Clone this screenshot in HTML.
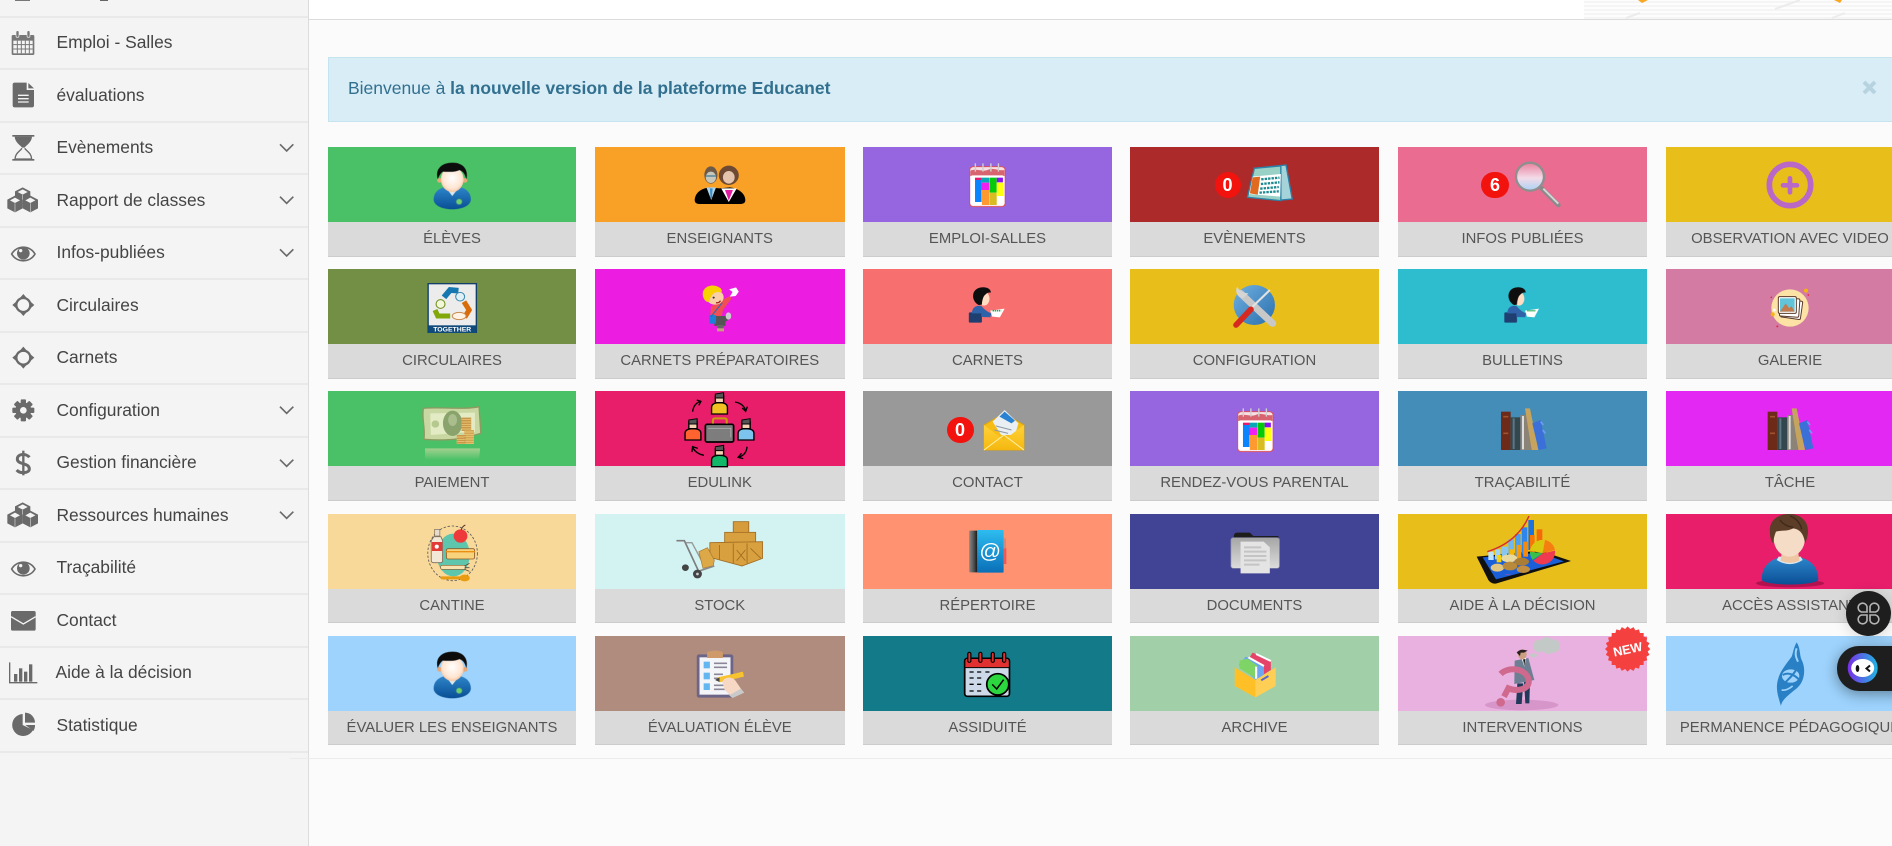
<!DOCTYPE html>
<html lang="fr">
<head>
<meta charset="utf-8">
<title>Educanet</title>
<style>
html,body{margin:0;padding:0;width:1892px;height:846px;overflow:hidden;background:#fbfbfb;font-family:"Liberation Sans",Arial,sans-serif}
.abs,.t,.l,.m,.tx{position:absolute}
#side{position:absolute;left:0;top:0;width:308px;height:846px;background:#f4f4f4;border-right:1px solid #dcdcdc}
.ln{position:absolute;left:0;width:308px;height:2px;background:#e9e9e9}
.tx{left:56.5px;height:24px;line-height:23px;font-size:17.4px;color:#444;white-space:nowrap}
#hdr{position:absolute;left:309px;top:0;right:0;height:19px;background:#fff;border-bottom:1px solid #dcdcdc}
#pat{position:absolute;left:1584px;top:0;width:308px;height:19px;background:repeating-linear-gradient(0deg,#f5f5f5 0 2px,#fdfdfd 2px 4px)}
#alert{position:absolute;left:328px;top:57px;width:1600px;height:63px;background:#d9edf7;border:1px solid #c4e5ef;box-sizing:content-box;color:#31708f;font-size:17.5px;line-height:61px;text-indent:19px;white-space:nowrap}
.t{height:109px}
.m{left:0;top:0;width:100%;height:75px}
.l{left:0;top:75px;width:100%;height:34px;background:#dadada;border-bottom:1px solid #ccc;text-align:center;color:#555;font-size:14.85px;line-height:35px;white-space:nowrap}
.r4 .l,.r5 .l{height:33px}
.c1{left:328px;width:248px}.c2{left:595px;width:249.5px}.c3{left:863px;width:249px}
.c4{left:1130px;width:249px}.c5{left:1398px;width:249px}.c6{left:1666px;width:248px}
.r1{top:147px}.r2{top:269px}.r3{top:391px}.r4{top:514px}.r5{top:636px}
.b{position:absolute;background:#f2120e;color:#fff;font-weight:bold;font-size:18px;text-align:center;z-index:5}
#foot{position:absolute;left:290px;top:758px;width:1602px;height:1px;background:#ebebeb}
svg.o{position:absolute;left:0;top:0;z-index:4}
.f{position:absolute;background:#1e1e1e;z-index:6}
</style>
</head>
<body>

<div id="side">
<div class="ln" style="top:16px"></div><div class="ln" style="top:68px"></div><div class="ln" style="top:121px"></div><div class="ln" style="top:173px"></div><div class="ln" style="top:226px"></div><div class="ln" style="top:278px"></div><div class="ln" style="top:331px"></div><div class="ln" style="top:383px"></div><div class="ln" style="top:436px"></div><div class="ln" style="top:488px"></div><div class="ln" style="top:541px"></div><div class="ln" style="top:593px"></div><div class="ln" style="top:646px"></div><div class="ln" style="top:698px"></div><div class="ln" style="top:751px"></div>
<div class="tx" style="top:31px">Emploi - Salles</div>
<div class="tx" style="top:84px">évaluations</div>
<div class="tx" style="top:136px">Evènements</div>
<div class="tx" style="top:189px">Rapport de classes</div>
<div class="tx" style="top:241px">Infos-publiées</div>
<div class="tx" style="top:294px">Circulaires</div>
<div class="tx" style="top:346px">Carnets</div>
<div class="tx" style="top:399px">Configuration</div>
<div class="tx" style="top:451px">Gestion financière</div>
<div class="tx" style="top:504px">Ressources humaines</div>
<div class="tx" style="top:556px">Traçabilité</div>
<div class="tx" style="top:609px">Contact</div>
<div class="tx" style="top:661px;left:55.5px">Aide à la décision</div>
<div class="tx" style="top:714px">Statistique</div>
</div>

<div id="hdr"></div>
<div id="pat"></div>
<div id="alert">Bienvenue à <b>la nouvelle version de la plateforme Educanet</b></div>

<div class="t c1 r1"><div class="m" style="background:#4ac167"></div><div class="l">ÉLÈVES</div></div>
<div class="t c2 r1"><div class="m" style="background:#f9a026"></div><div class="l">ENSEIGNANTS</div></div>
<div class="t c3 r1"><div class="m" style="background:#9666e0"></div><div class="l">EMPLOI-SALLES</div></div>
<div class="t c4 r1"><div class="m" style="background:#ad2a2a"></div><div class="l">EVÈNEMENTS</div></div>
<div class="t c5 r1"><div class="m" style="background:#ea6d91"></div><div class="l">INFOS PUBLIÉES</div></div>
<div class="t c6 r1"><div class="m" style="background:#e8be1a"></div><div class="l">OBSERVATION AVEC VIDEO</div></div>

<div class="t c1 r2"><div class="m" style="background:#728f45"></div><div class="l">CIRCULAIRES</div></div>
<div class="t c2 r2"><div class="m" style="background:#ec1de0"></div><div class="l">CARNETS PRÉPARATOIRES</div></div>
<div class="t c3 r2"><div class="m" style="background:#f76f6f"></div><div class="l">CARNETS</div></div>
<div class="t c4 r2"><div class="m" style="background:#e8be1a"></div><div class="l">CONFIGURATION</div></div>
<div class="t c5 r2"><div class="m" style="background:#2ebdcf"></div><div class="l">BULLETINS</div></div>
<div class="t c6 r2"><div class="m" style="background:#d37ba3"></div><div class="l">GALERIE</div></div>

<div class="t c1 r3"><div class="m" style="background:#4ac167"></div><div class="l">PAIEMENT</div></div>
<div class="t c2 r3"><div class="m" style="background:#e81e6b"></div><div class="l">EDULINK</div></div>
<div class="t c3 r3"><div class="m" style="background:#999"></div><div class="l">CONTACT</div></div>
<div class="t c4 r3"><div class="m" style="background:#9666e0"></div><div class="l">RENDEZ-VOUS PARENTAL</div></div>
<div class="t c5 r3"><div class="m" style="background:#438db8"></div><div class="l">TRAÇABILITÉ</div></div>
<div class="t c6 r3"><div class="m" style="background:#e428f4"></div><div class="l">TÂCHE</div></div>

<div class="t c1 r4"><div class="m" style="background:#f8d99a"></div><div class="l">CANTINE</div></div>
<div class="t c2 r4"><div class="m" style="background:#d3f3f3"></div><div class="l">STOCK</div></div>
<div class="t c3 r4"><div class="m" style="background:#ff9270"></div><div class="l">RÉPERTOIRE</div></div>
<div class="t c4 r4"><div class="m" style="background:#414394"></div><div class="l">DOCUMENTS</div></div>
<div class="t c5 r4"><div class="m" style="background:#e8be1a"></div><div class="l">AIDE À LA DÉCISION</div></div>
<div class="t c6 r4"><div class="m" style="background:#e81e6b"></div><div class="l">ACCÈS ASSISTANT</div></div>

<div class="t c1 r5"><div class="m" style="background:#9dd3fd"></div><div class="l">ÉVALUER LES ENSEIGNANTS</div></div>
<div class="t c2 r5"><div class="m" style="background:#b08c7e"></div><div class="l">ÉVALUATION ÉLÈVE</div></div>
<div class="t c3 r5"><div class="m" style="background:#137a8a"></div><div class="l">ASSIDUITÉ</div></div>
<div class="t c4 r5"><div class="m" style="background:#a1cfa7"></div><div class="l">ARCHIVE</div></div>
<div class="t c5 r5"><div class="m" style="background:#e9b1e0"></div><div class="l">INTERVENTIONS</div></div>
<div class="t c6 r5"><div class="m" style="background:#9dd3fd"></div><div class="l">PERMANENCE PÉDAGOGIQUE</div></div>

<div id="foot"></div>

<div class="b" style="left:1214.5px;top:172px;width:26px;height:26px;border-radius:13px;line-height:26px">0</div>
<div class="b" style="left:1481px;top:172px;width:28px;height:26px;border-radius:13px;line-height:26px">6</div>
<div class="b" style="left:946.5px;top:417px;width:27px;height:26px;border-radius:13px;line-height:26px">0</div>

<svg class="o" width="1892" height="846" viewBox="0 0 1892 846" xmlns="http://www.w3.org/2000/svg">
<defs>
<linearGradient id="gb" x1="0" y1="0" x2="0" y2="1"><stop offset="0" stop-color="#2f88cc"/><stop offset="1" stop-color="#0a4f96"/></linearGradient>
<radialGradient id="gf" cx=".5" cy=".45" r=".6"><stop offset="0" stop-color="#fff"/><stop offset=".7" stop-color="#ffe6d2"/><stop offset="1" stop-color="#f4b98e"/></radialGradient>
<linearGradient id="gl" x1="0" y1="0" x2="0" y2="1"><stop offset="0" stop-color="#e9809c"/><stop offset=".55" stop-color="#f3dbe8"/><stop offset="1" stop-color="#a9d2f5"/></linearGradient>
<linearGradient id="gs" x1="0" y1="0" x2="1" y2="0"><stop offset="0" stop-color="#888"/><stop offset=".5" stop-color="#555"/><stop offset="1" stop-color="#111"/></linearGradient>
<linearGradient id="gr" x1="0" y1="0" x2="0" y2="1"><stop offset="0" stop-color="#2dbcf0"/><stop offset="1" stop-color="#0a6fb8"/></linearGradient>
<linearGradient id="gd" x1="0" y1="0" x2="0" y2="1"><stop offset="0" stop-color="#a6a6a6"/><stop offset="1" stop-color="#dcdcdc"/></linearGradient>
<linearGradient id="ge" x1="0" y1="0" x2="0" y2="1"><stop offset="0" stop-color="#ffd23a"/><stop offset="1" stop-color="#f5b810"/></linearGradient>
<linearGradient id="gg" x1="0" y1="0" x2="1" y2="1"><stop offset="0" stop-color="#6fb0e0"/><stop offset="1" stop-color="#2a6fae"/></linearGradient>
<linearGradient id="gm" x1="0" y1="0" x2="0" y2="1"><stop offset="0" stop-color="#b8d49a" stop-opacity=".8"/><stop offset="1" stop-color="#b8d49a" stop-opacity="0"/></linearGradient>

<g id="stu">
<path d="M330 598C330 565 365 558 384 558C404 558 438 565 438 598C438 618 410 628 384 628C358 628 330 618 330 598Z" fill="url(#gb)"/>
<path d="M365 562L384 588L404 562L398 552H370Z" fill="#dce8f0"/>
<circle cx="404" cy="605" r="9" fill="#6fcf6f" stroke="#2f7f90" stroke-width="2"/>
<circle cx="347" cy="541" r="7" fill="#e9a877"/><circle cx="421" cy="541" r="7" fill="#e9a877"/>
<ellipse cx="384" cy="538" rx="33" ry="38" fill="url(#gf)"/>
<path d="M342 538C333 505 355 488 385 488C415 488 432 508 425 538C421 522 416 514 405 510C390 518 368 515 356 515C350 520 345 528 342 538Z" fill="#0c0c0c"/>
</g>
<g id="tt">
<rect x="318" y="500" width="104" height="120" rx="11" fill="#f7dfe3" stroke="#d9505f" stroke-width="3"/>
<path d="M320 512C340 504 355 518 375 508C390 503 405 514 420 510V528H320Z" fill="#d8646f"/>
<rect x="322" y="526" width="96" height="90" rx="5" fill="#fff"/>
<path d="M335 490V515M357 490V515M380 490V515M402 490V515" stroke="#cfcfcf" stroke-width="4"/>
<rect x="334" y="533" width="19" height="7" fill="#e8186f"/>
<rect x="334" y="540" width="19" height="66" fill="#0a84ff"/>
<rect x="353" y="533" width="22" height="15" fill="#0aa7b4"/>
<rect x="353" y="548" width="22" height="22" fill="#f020f0"/>
<rect x="354" y="570" width="21" height="45" fill="#ff9a30"/>
<rect x="376" y="533" width="21" height="45" fill="#06c80a"/>
<rect x="376" y="578" width="21" height="37" fill="#d8bc22"/>
<rect x="397" y="533" width="18" height="14" fill="#8a10f0"/>
<rect x="397" y="548" width="20" height="40" fill="#ffff10"/>
</g>
<g id="bul">
<rect x="316" y="157" width="38" height="31" rx="3" fill="#1e3f70"/>
<path d="M325 160C325 142 338 135 352 138C360 146 368 156 382 160L378 172C368 172 358 172 352 170L352 160Z" fill="#2f62a8"/>
<ellipse cx="360" cy="116" rx="16" ry="21" fill="#ffdcc2"/>
<path d="M345 135C325 125 322 95 342 85C358 78 380 82 380 98C370 96 366 102 360 108C356 116 354 125 354 134Z" fill="#0e0e0e"/>
<path d="M378 152L420 146L406 172L384 170Z" fill="#fff"/>
<path d="M385 152H410" stroke="#1ea84e" stroke-width="5" stroke-dasharray="4 2"/>
</g>
<g id="bk">
<rect x="363" y="455" width="29" height="115" fill="#6d2a18"/>
<path d="M370 470H385M370 520H385" stroke="#a0542e" stroke-width="5"/>
<rect x="392" y="472" width="29" height="98" fill="#33474f"/>
<rect x="398" y="475" width="6" height="92" fill="#5f7780"/>
<rect x="421" y="465" width="32" height="105" fill="#8b8378"/>
<rect x="426" y="468" width="6" height="100" fill="#ddd"/>
<path d="M435 445H450L475 570H455Z" fill="#c6a45e"/>
<path d="M457 490L482 480L500 565L476 570Z" fill="#3a70d8"/>
<path d="M482 485L490 495M488 510L496 520" stroke="#6e9cf0" stroke-width="5"/>
</g>
<g id="cube"><path d="M0-25L23-13V13L0 25L-23 13V-13Z" fill="#6a6a6a"/><path d="M0-19L15-11L0-3L-15-11Z" fill="#f4f4f4"/><path d="M0-2V24" stroke="#f4f4f4" stroke-width="1.5"/></g>
<g id="eye"><path d="M35 762C50 735 90 735 105 762C90 789 50 789 35 762Z" fill="#f4f4f4" stroke="#6a6a6a" stroke-width="5"/><circle cx="70" cy="760" r="19" fill="#6a6a6a"/><circle cx="62" cy="752" r="5" fill="#f4f4f4"/></g>
<g id="cr"><circle cx="70" cy="915" r="21" fill="none" stroke="#6a6a6a" stroke-width="7"/><path d="M70 882L83 897H57ZM70 948L83 933H57ZM37 915L52 902V928ZM103 915L88 902V928Z" fill="#6a6a6a"/></g>
<path id="chev" d="M840 433L860 453L880 433" fill="none" stroke="#6a6a6a" stroke-width="5"/>
<g id="ep">
<path d="M-23 62V42C-23 30-10 28 0 28C10 28 23 30 23 42V62Z" stroke="#000" stroke-width="4"/>
<rect x="-12" y="8" width="24" height="20" fill="#f5d2b3" stroke="#000" stroke-width="4"/>
<path d="M-12 14V2L12-2V14Z" fill="#555" stroke="#000" stroke-width="3"/>
</g>
</defs>

<!-- sidebar icons -->
<rect x="15" y="0" width="15" height="1" fill="#777"/>
<rect x="100" y="0" width="8" height="1" fill="#666"/>
<g transform="scale(.33333)">
<rect x="35" y="105" width="68" height="60" rx="4" fill="#777"/>
<rect x="40" y="122" width="58" height="38" fill="#f4f4f4"/>
<path d="M40 134H98M40 147H98M52 122V160M64 122V160M76 122V160M88 122V160" stroke="#777" stroke-width="3"/>
<rect x="48" y="92" width="9" height="20" rx="4" fill="#777" stroke="#f4f4f4" stroke-width="2"/>
<rect x="81" y="92" width="9" height="20" rx="4" fill="#777" stroke="#f4f4f4" stroke-width="2"/>
<path d="M38 254Q38 248 44 248H80V270H102V316Q102 322 96 322H44Q38 322 38 316Z" fill="#6a6a6a"/>
<path d="M85 249L102 265H85Z" fill="#6a6a6a"/>
<path d="M54 286H86M54 296H86M54 306H86" stroke="#f4f4f4" stroke-width="4"/>
<rect x="37" y="405" width="66" height="5" fill="#6a6a6a"/><rect x="37" y="477" width="66" height="5" fill="#6a6a6a"/>
<path d="M44 410H96C95 428 78 436 74 443H66C62 436 45 428 44 410Z" fill="#6a6a6a"/>
<path d="M66 445C58 455 46 460 45 477H95C94 460 82 455 74 445" fill="none" stroke="#6a6a6a" stroke-width="4"/>
<use href="#cube" transform="translate(68 587)"/><use href="#cube" transform="translate(45 612)"/><use href="#cube" transform="translate(91 612)"/>
<use href="#eye"/>
<use href="#cr"/><use href="#cr" y="158"/>
<use href="#chev"/><use href="#chev" y="157"/><use href="#chev" y="315"/><use href="#chev" y="787"/><use href="#chev" y="946"/><use href="#chev" y="1102"/>
<circle cx="70" cy="1231" r="24" fill="#6a6a6a"/>
<g fill="#6a6a6a"><rect x="62" y="1198" width="16" height="66" rx="3"/><rect x="62" y="1198" width="16" height="66" rx="3" transform="rotate(45 70 1231)"/><rect x="62" y="1198" width="16" height="66" rx="3" transform="rotate(90 70 1231)"/><rect x="62" y="1198" width="16" height="66" rx="3" transform="rotate(135 70 1231)"/></g>
<circle cx="70" cy="1231" r="10" fill="#f4f4f4"/>
<g transform="translate(0 1260)">
<path d="M88 112C80 100 52 100 52 117C52 135 88 127 88 147C88 160 60 162 50 150" fill="none" stroke="#6a6a6a" stroke-width="9"/>
<path d="M70 92V166" stroke="#6a6a6a" stroke-width="7"/>
<use href="#cube" transform="translate(68 272)"/><use href="#cube" transform="translate(45 297)"/><use href="#cube" transform="translate(91 297)"/>
<rect x="33" y="573" width="74" height="59" rx="5" fill="#6a6a6a"/>
<path d="M33 590L70 612L107 590" fill="none" stroke="#f4f4f4" stroke-width="4"/>
<path d="M29 727V788H112" fill="none" stroke="#6a6a6a" stroke-width="4"/>
<rect x="42" y="762" width="10" height="23" fill="#6a6a6a"/><rect x="57" y="745" width="10" height="40" fill="#6a6a6a"/><rect x="72" y="755" width="10" height="30" fill="#6a6a6a"/><rect x="87" y="733" width="10" height="52" fill="#6a6a6a"/>
<path d="M68 882A33 33 0 1 0 99 930L68 915Z" fill="#6a6a6a"/>
<path d="M75 878A30 30 0 0 1 105 908H75Z" fill="#6a6a6a"/>
<path d="M76 915H105A30 30 0 0 1 100 933Z" fill="#6a6a6a"/>
</g>
<use href="#eye" y="945"/>
</g>

<!-- top-right image hints -->
<path d="M1626 18L1640 13M1775 9L1800 0M1832 18L1845 13" stroke="#ececec" stroke-width="2"/>
<path d="M1638 0H1648L1642 3ZM1834 0H1842L1840 3Z" fill="#f7a825"/>
<path d="M1864 82L1875 93M1875 82L1864 93" stroke="#b6d3df" stroke-width="4"/>

<g style="filter:blur(.35px)">
<!-- crop A -->
<g transform="translate(320 0) scale(.34439 .33333)">
<use href="#stu"/><use href="#stu" y="1467"/>
<path d="M1088 600C1090 575 1110 565 1130 562L1160 565L1190 562C1215 565 1235 580 1235 600C1235 612 1225 612 1215 612H1105C1095 612 1088 610 1088 600Z" fill="#000"/>
<ellipse cx="1135" cy="525" rx="19" ry="26" fill="#6e5a48"/>
<ellipse cx="1135" cy="532" rx="15" ry="17" fill="#c9c6ba"/>
<path d="M1120 528H1150" stroke="#5f8f9f" stroke-width="5"/>
<path d="M1122 562L1136 600L1150 562Z" fill="#b0d2e6"/><path d="M1132 565H1140L1138 595H1134Z" fill="#3d8fc8"/>
<circle cx="1187" cy="526" r="29" fill="#6e4a34"/>
<ellipse cx="1187" cy="532" rx="17" ry="19" fill="#e5c4ad"/>
<path d="M1165 565L1187 606L1210 565Z" fill="#fff"/><path d="M1176 570L1187 602L1199 570Z" fill="#e01ba0"/>
</g>
<!-- crop B -->
<g transform="translate(860 0) scale(.34439 .33333)">
<use href="#tt"/>
<path d="M1145 505L1237 495L1255 597L1222 600Z" fill="#a4d4d9" stroke="#2b7fa8" stroke-width="4"/>
<path d="M1145 505L1222 498V602L1125 592Z" fill="#9ad1c6" stroke="#2b84a8" stroke-width="4"/>
<path d="M1140 530L1222 522L1220 590L1130 582Z" fill="#fff"/>
<path d="M1140 532L1162 530L1155 584L1132 580Z" fill="#e06a1f"/>
<path d="M1165 538L1218 533M1164 552L1218 547M1162 566L1216 561M1160 578L1216 574" stroke="#1e8a8f" stroke-width="7" stroke-dasharray="7 3"/>
</g>
<!-- crop C -->
<g transform="translate(1380 0) scale(.33333)">
<path d="M485 565L535 615" stroke="#8a8a8a" stroke-width="14" stroke-linecap="round"/>
<path d="M490 566L535 611" stroke="#d5d5d5" stroke-width="6"/>
<circle cx="450" cy="530" r="42" fill="url(#gl)" stroke="#8f8f8f" stroke-width="7"/>
<circle cx="1230" cy="555" r="62" fill="none" stroke="#b968c7" stroke-width="17"/>
<path d="M1209 556H1251M1230 535V577" stroke="#b968c7" stroke-width="14" stroke-linecap="round"/>
</g>
<!-- crop D -->
<g transform="translate(320 260) scale(.34439 .33333)">
<rect x="314" y="71" width="140" height="146" fill="#ececec" stroke="#12406b" stroke-width="4"/>
<rect x="314" y="196" width="140" height="23" fill="#0f4a7a"/>
<text x="384" y="214" text-anchor="middle" font-family="Liberation Sans,sans-serif" font-weight="bold" font-size="20" fill="#fff">TOGETHER</text>
<path d="M360 112L378 90L402 92" fill="none" stroke="#1578b0" stroke-width="17"/>
<path d="M418 125L433 150L420 172" fill="none" stroke="#d96c0a" stroke-width="15"/>
<path d="M378 168H342L334 150" fill="none" stroke="#82a70b" stroke-width="15"/>
<circle cx="407" cy="110" r="13" fill="#dff0f6" stroke="#3a8ab0" stroke-width="3"/>
<circle cx="350" cy="132" r="13" fill="#f2f6da" stroke="#6b8a12" stroke-width="3"/>
<ellipse cx="404" cy="168" rx="20" ry="11" fill="#fff3e6" stroke="#c98a50" stroke-width="3"/>
<!-- kid -->
<path d="M1160 125L1190 108L1195 116L1170 150L1165 175L1133 170L1135 140Z" fill="#ef4f55"/>
<rect x="1145" y="168" width="32" height="30" fill="#555"/>
<path d="M1172 170L1190 168L1188 178L1170 190Z" fill="#555"/>
<ellipse cx="1186" cy="168" rx="8" ry="11" fill="#ccc"/>
<path d="M1152 195H1172L1170 210L1154 214Z" fill="#666"/><path d="M1153 205H1173V214H1153Z" fill="#c8a080"/>
<rect x="1130" y="165" width="20" height="26" rx="5" fill="#1c7fd8"/>
<path d="M1135 170L1168 128" stroke="#2d6ab0" stroke-width="3"/>
<ellipse cx="1147" cy="112" rx="25" ry="22" fill="#f9cfa8"/>
<path d="M1113 112C1105 85 1130 72 1150 78C1165 82 1170 92 1165 98C1150 92 1135 100 1130 125C1122 128 1116 120 1113 112Z" fill="#f7d100"/>
<circle cx="1143" cy="113" r="3" fill="#333"/><path d="M1150 128Q1158 130 1163 122" stroke="#a02020" stroke-width="4" fill="none"/>
<path d="M1188 88L1208 82L1216 95L1207 108L1190 110L1198 96Z" fill="#fff"/>
<!-- money -->
<path d="M300 445C340 440 420 450 462 440L467 520C430 530 400 545 302 538C306 500 295 480 300 445Z" fill="#c9d8a2" stroke="#8c9a60" stroke-width="4"/>
<path d="M320 460L450 458L450 515L322 525Z" fill="#e2ebc4"/>
<ellipse cx="385" cy="490" rx="28" ry="38" fill="#8aa36d"/>
<ellipse cx="385" cy="480" rx="13" ry="18" fill="#a9bd8d"/><circle cx="335" cy="492" r="11" fill="#b5c98f"/>
<rect x="411" y="473" width="28" height="40" fill="#f0d080"/><rect x="419" y="510" width="28" height="42" fill="#f0d080"/><rect x="397" y="525" width="26" height="27" fill="#f0d080"/>
<path d="M425 473V513" stroke="#c9984a" stroke-width="28" stroke-dasharray="5 2"/>
<path d="M433 510V552" stroke="#d1a552" stroke-width="28" stroke-dasharray="5 2"/>
<path d="M410 525V552" stroke="#c9984a" stroke-width="26" stroke-dasharray="5 2"/>
<path d="M305 565H465L462 600H305Z" fill="url(#gm)"/>
<!-- edulink -->
<rect x="1119" y="493" width="82" height="53" rx="5" fill="#7d7d7d" stroke="#000" stroke-width="5"/>
<path d="M1127 505H1193V532" fill="none" stroke="#bbb" stroke-width="2"/>
<path d="M1141 491V481Q1141 475 1147 475H1175Q1181 475 1181 481V491" fill="none" stroke="#c79a10" stroke-width="6"/>
<use href="#ep" transform="translate(1160 400)" fill="#f2c222"/>
<use href="#ep" transform="translate(1083 478)" fill="#ff6330"/>
<use href="#ep" transform="translate(1237 478)" fill="#7cc4ee"/>
<use href="#ep" transform="translate(1160 558)" fill="#11b867"/>
<g fill="none" stroke="#000" stroke-width="4"><path d="M1082 455Q1085 430 1105 424M1094 420L1106 424L1100 436"/><path d="M1205 426Q1230 430 1236 452M1226 444L1236 454L1241 440"/><path d="M1240 560Q1238 585 1215 592M1224 580L1214 592L1229 596"/><path d="M1115 586Q1092 582 1082 562M1080 576L1082 560L1097 565"/></g>
</g>
<!-- crop E -->
<g transform="translate(860 260) scale(.34439 .33333)">
<use href="#bul"/>
<circle cx="1145" cy="135" r="60" fill="url(#gg)"/>
<path d="M1105 100L1198 190" stroke="#c8c8c8" stroke-width="21" stroke-linecap="round"/>
<path d="M1095 80Q1085 105 1112 115L1128 100Q1105 100 1095 80Z" fill="#d5d5d5"/>
<path d="M1130 150L1190 90" stroke="#e2e2e2" stroke-width="6"/>
<path d="M1092 195L1135 148" stroke="#d62a20" stroke-width="17" stroke-linecap="round"/>
<path d="M360 495L418 460L476 495V570H360Z" fill="#f6bd14" stroke="#dba40f" stroke-width="3"/>
<path d="M385 485L420 450L460 490L450 525L410 525Z" fill="#e9eff2"/>
<path d="M405 470L420 455L450 482L440 490Z" fill="#2a82d2"/>
<path d="M395 498L440 510M390 510L430 520" stroke="#8d9aa5" stroke-width="3"/>
<path d="M360 495L418 540L476 495V570H360Z" fill="url(#ge)"/>
<path d="M360 570L418 525L476 570" fill="none" stroke="#fff0a8" stroke-width="3"/>
<use href="#tt" transform="translate(778 -45)"/>
</g>
<!-- crop F -->
<g transform="translate(1380 260) scale(.33333)">
<use href="#bul" x="57"/>
<use href="#bk"/><use href="#bk" x="800"/>
<circle cx="1230" cy="144" r="56" fill="#fde2a6"/>
<rect x="1205" y="120" width="60" height="55" rx="4" fill="#fff" stroke="#5a3a2a" stroke-width="3" transform="rotate(8 1235 147)"/>
<rect x="1200" y="115" width="58" height="55" rx="4" fill="#fff" stroke="#5a3a2a" stroke-width="3" transform="rotate(4 1230 142)"/>
<rect x="1195" y="110" width="54" height="50" rx="4" fill="#fff" stroke="#5a3a2a" stroke-width="3"/>
<rect x="1200" y="115" width="44" height="40" fill="#62c4d8"/>
<path d="M1200 155L1217 130L1228 145L1234 138L1244 155Z" fill="#c27a4f"/>
<circle cx="1278" cy="92" r="6" fill="#f5b20c"/><circle cx="1178" cy="163" r="6" fill="#f5b20c"/><circle cx="1183" cy="150" r="4" fill="#fff"/><circle cx="1285" cy="105" r="2.5" fill="#e5283a"/><circle cx="1192" cy="199" r="3" fill="#e5283a"/><circle cx="1174" cy="112" r="2.5" fill="#e5283a"/>
</g>
<!-- crop G -->
<g transform="translate(320 500) scale(.34439 .33333)">
<ellipse cx="385" cy="160" rx="72" ry="82" fill="none" stroke="#5a5a5a" stroke-width="2.5" stroke-dasharray="7 5"/>
<ellipse cx="387" cy="165" rx="48" ry="64" fill="#5fc6ae"/>
<path d="M331 110H351L356 122V182Q356 188 350 188H330Q323 188 323 182V122Z" fill="#f3e8d6" stroke="#7a6a5a" stroke-width="2.5"/>
<rect x="333" y="88" width="15" height="20" fill="#e6dccd" stroke="#7a6a5a" stroke-width="2"/>
<rect x="325" y="126" width="30" height="27" fill="#e23a36"/>
<circle cx="339" cy="140" r="6" fill="#fff"/>
<circle cx="408" cy="108" r="20" fill="#ee3a3a"/><path d="M410 90Q412 80 422 75" stroke="#5a3a2a" stroke-width="3" fill="none"/>
<rect x="367" y="146" width="82" height="31" rx="5" fill="#f9d27c" stroke="#8a5a2a" stroke-width="2.5"/>
<path d="M365 155H450" stroke="#e88f14" stroke-width="4"/>
<rect x="350" y="196" width="72" height="12" rx="5" fill="#f8e2b0" stroke="#8a5a2a" stroke-width="2"/>
<path d="M420 198L434 190M420 203H434M420 208L434 214" stroke="#5a4a3a" stroke-width="2.5"/>
<rect x="350" y="229" width="62" height="9" rx="4" fill="#e99b12"/>
<ellipse cx="420" cy="234" rx="15" ry="10" fill="#e99b12"/>
<!-- stock -->
<g stroke="#a06c22" stroke-width="2.5"><rect x="1200" y="65" width="45" height="37" fill="#d69c3c"/><rect x="1175" y="97" width="90" height="42" fill="#d9a040"/><path d="M1132 128L1285 125V175L1225 198L1132 172Z" fill="#d8a03e"/><path d="M1160 135V178M1200 130V190M1240 130V190M1210 150L1235 182M1235 150L1210 182M1250 145L1280 175"/></g>
<path d="M1035 122H1058L1100 215" fill="none" stroke="#7e7e7e" stroke-width="5"/>
<path d="M1062 128H1080L1120 205" fill="none" stroke="#999" stroke-width="4"/>
<path d="M1100 155L1125 143L1145 180L1142 197L1112 205Z" fill="#dda848" stroke="#ac7a2c" stroke-width="2"/>
<path d="M1095 215L1145 198" stroke="#8a8a8a" stroke-width="5"/>
<circle cx="1061" cy="203" r="10" fill="#444"/><circle cx="1096" cy="222" r="13" fill="#444"/><circle cx="1096" cy="222" r="4" fill="#ccc"/>
<!-- eval -->
<rect x="1094" y="463" width="106" height="130" rx="7" fill="#6c6587"/>
<rect x="1102" y="472" width="90" height="112" fill="#f4f5f8"/>
<path d="M1124 474V460Q1124 454 1132 454L1140 452H1154L1162 454Q1170 454 1170 460V474Z" fill="#cf9a6a"/>
<g fill="#63b6f0"><rect x="1114" y="485" width="18" height="20"/><rect x="1114" y="518" width="18" height="20"/><rect x="1114" y="550" width="18" height="20"/></g>
<path d="M1144 490H1182M1144 502H1182M1144 523H1170M1144 535H1165M1144 556H1172M1144 568H1180" stroke="#8b8698" stroke-width="5"/>
<path d="M1155 532L1228 515L1231 530L1160 547Z" fill="#f7c32e"/>
<path d="M1147 540L1160 532V546Z" fill="#444"/>
<path d="M1168 545C1175 530 1195 530 1205 540L1230 578L1198 592L1175 570Z" fill="#f6d8c5"/>
<path d="M1222 566L1232 578L1198 594L1188 586Z" fill="#c9c9c9"/>
</g>
<!-- crop H -->
<g transform="translate(860 500) scale(.34439 .33333)">
<rect x="317" y="92" width="25" height="125" rx="3" fill="url(#gs)"/>
<rect x="340" y="90" width="77" height="128" rx="3" fill="url(#gr)"/>
<path d="M417 115H424V145H417Z" fill="#d08a80"/><path d="M417 145H425V192H417Z" fill="#ea5a5a"/>
<text x="378" y="174" text-anchor="middle" font-family="Liberation Sans,sans-serif" font-size="62" fill="#fff">@</text>
<path d="M1085 112Q1085 98 1095 98H1132L1142 108H1215V130H1085Z" fill="#1d1d1d"/>
<rect x="1077" y="113" width="141" height="92" rx="7" fill="url(#gd)" stroke="#8a8aa8" stroke-width="2"/>
<path d="M1105 125H1172L1190 142V220H1105Z" fill="#e4e4e4"/>
<path d="M1115 142H1165M1115 155H1180M1115 168H1180M1115 181H1180M1115 194H1160" stroke="#c4c4c4" stroke-width="6"/>
<rect x="304" y="475" width="130" height="114" rx="8" fill="#cdd9e8" stroke="#000" stroke-width="5"/>
<path d="M306 502V485Q306 477 314 477H424Q432 477 432 485V502Z" fill="#e03030"/>
<path d="M304 503H434" stroke="#000" stroke-width="3"/>
<g fill="#e03030" stroke="#000" stroke-width="3.5"><rect x="313" y="457" width="9" height="30" rx="4.5"/><rect x="345" y="457" width="9" height="30" rx="4.5"/><rect x="381" y="457" width="9" height="30" rx="4.5"/><rect x="414" y="457" width="9" height="30" rx="4.5"/></g>
<path d="M318 516H330M340 516H352M364 516H376M318 534H330M340 534H352M318 553H330M340 553H352M318 573H330M340 573H352" stroke="#000" stroke-width="4"/>
<circle cx="400" cy="553" r="32" fill="#2bd63f" stroke="#000" stroke-width="5"/>
<path d="M384 553L397 567L417 539" fill="none" stroke="#000" stroke-width="4.5"/>
<path d="M1140 458L1193 482V510L1170 525L1120 490Z" fill="#e54468"/><path d="M1150 462L1193 483" stroke="#fff" stroke-width="6"/>
<path d="M1120 470L1173 497V530L1150 540L1100 495Z" fill="#6aa6f2"/><path d="M1128 472L1173 498" stroke="#fff" stroke-width="6"/>
<path d="M1102 482L1125 476L1155 498V538L1102 505Z" fill="#7fd466"/><path d="M1150 500V536" stroke="#fff" stroke-width="6"/>
<path d="M1088 502L1148 540V592L1088 558Z" fill="#ffbf26"/>
<path d="M1148 540L1207 502V558L1148 592Z" fill="#ffcf55"/>
<path d="M1165 541L1186 528" stroke="#5a6ac8" stroke-width="6"/>
</g>
<!-- crop I -->
<g transform="translate(1380 500) scale(.33333)">
<path d="M290 170L480 152L573 183L350 250Q335 254 325 240Z" fill="#101010"/>
<path d="M308 172L478 158L552 184L348 238Z" fill="#1a5fd8"/>
<rect x="325" y="155" width="16" height="25" fill="#bfe4f8"/><rect x="345" y="148" width="16" height="30" fill="#9fd4f5"/><rect x="365" y="140" width="16" height="30" fill="#87c6f2"/><rect x="350" y="165" width="14" height="22" fill="#f6d30c"/>
<rect x="385" y="118" width="17" height="50" fill="#6db8f0"/><rect x="390" y="148" width="14" height="30" fill="#f6b80c"/>
<rect x="405" y="102" width="17" height="65" fill="#4a9ff0"/><rect x="410" y="135" width="14" height="40" fill="#f69a0c"/>
<rect x="425" y="82" width="17" height="80" fill="#2f86ea"/><rect x="430" y="125" width="14" height="45" fill="#f68a0c"/>
<rect x="445" y="60" width="17" height="90" fill="#1e72e0"/><rect x="450" y="105" width="14" height="55" fill="#f5770a"/>
<rect x="470" y="88" width="17" height="60" fill="#f4690a"/>
<path d="M322 155C370 140 420 110 447 48" fill="none" stroke="#d63030" stroke-width="4.5"/>
<ellipse cx="388" cy="175" rx="24" ry="12" fill="#e8d9a0"/>
<ellipse cx="352" cy="203" rx="20" ry="12" fill="#e3c680"/><ellipse cx="390" cy="198" rx="22" ry="13" fill="#b98a3c"/><ellipse cx="425" cy="185" rx="22" ry="12" fill="#a97d35"/><ellipse cx="430" cy="208" rx="20" ry="11" fill="#c28e40"/>
<path d="M372 225A20 8 0 0 1 395 225Z" fill="#e0489a"/>
<path d="M488 160L495 120A38 38 0 0 1 525 150Z" fill="#f57e10"/>
<path d="M488 160L525 152A38 38 0 0 1 460 182Z" fill="#f03a50"/>
<path d="M488 160L458 180A38 38 0 0 1 450 155Z" fill="#38c048"/>
<path d="M488 160L450 152A38 38 0 0 1 492 120Z" fill="#d8c90e"/>
<ellipse cx="1230" cy="250" rx="102" ry="12" fill="#b2134f"/>
<path d="M1145 240C1145 195 1175 170 1230 168C1285 170 1315 195 1315 240C1300 258 1160 258 1145 240Z" fill="url(#gb)"/>
<path d="M1190 180Q1230 205 1268 180L1262 170H1196Z" fill="#d9e7ef"/>
<path d="M1206 150H1254L1258 182Q1230 195 1202 182Z" fill="#eec6a4"/>
<ellipse cx="1228" cy="115" rx="47" ry="55" fill="#f4dcc6"/>
<path d="M1170 100C1165 60 1195 42 1228 42C1262 42 1290 65 1283 105C1280 118 1278 125 1275 130C1272 105 1262 88 1240 85C1220 95 1200 90 1188 95C1182 110 1180 120 1180 130C1175 125 1170 115 1170 100Z" fill="#5b3d28"/>
<path d="M1230 48C1250 55 1262 72 1265 88M1200 60C1210 75 1225 80 1240 82" stroke="#3e2818" stroke-width="4" fill="none"/>
<ellipse cx="425" cy="615" rx="110" ry="16" fill="#d796c9"/>
<circle cx="478" cy="438" r="19" fill="#c3c9c6"/><circle cx="500" cy="430" r="19" fill="#c3c9c6"/><circle cx="520" cy="438" r="20" fill="#c3c9c6"/><circle cx="505" cy="447" r="15" fill="#c3c9c6"/><ellipse cx="461" cy="466" rx="11" ry="6" fill="#c3c9c6"/>
<path d="M412 550H430L425 612H408ZM432 545H450L448 610H436Z" fill="#223a5a"/>
<path d="M404 482L445 474L463 540L403 552Z" fill="#6d7f92"/>
<path d="M425 476L433 500L438 474Z" fill="#fff"/><path d="M429 478L433 498L436 477Z" fill="#222"/>
<ellipse cx="427" cy="463" rx="13" ry="15" fill="#caa080"/>
<path d="M410 458Q420 444 443 452L432 458H422L420 468Z" fill="#2a2020"/>
<path d="M362 522C385 498 440 505 446 540C450 570 410 575 385 565L372 590" fill="none" stroke="#cf6a8e" stroke-width="18"/>
<circle cx="362" cy="607" r="13" fill="#cf6a8e"/>
<g transform="translate(743 447)" fill="#f54040"><rect x="-48" y="-48" width="96" height="96"/><rect x="-48" y="-48" width="96" height="96" transform="rotate(15)"/><rect x="-48" y="-48" width="96" height="96" transform="rotate(30)"/><rect x="-48" y="-48" width="96" height="96" transform="rotate(45)"/><rect x="-48" y="-48" width="96" height="96" transform="rotate(60)"/><rect x="-48" y="-48" width="96" height="96" transform="rotate(75)"/><text transform="rotate(-12)" y="14" text-anchor="middle" font-family="Liberation Sans,sans-serif" font-weight="bold" font-size="38" fill="#fff">NEW</text></g>
<path d="M1250 427C1262 445 1258 465 1265 480C1278 505 1275 545 1250 565C1225 585 1205 600 1203 618C1195 590 1185 565 1195 535C1200 515 1220 490 1235 470C1240 455 1242 440 1250 427Z" fill="#2a80c4"/>
<path d="M1250 445C1244 462 1248 472 1254 485" fill="none" stroke="#9dd3fd" stroke-width="6"/>
<ellipse cx="1232" cy="528" rx="26" ry="20" fill="#9dd3fd"/>
<path d="M1208 525C1225 515 1245 525 1258 540M1215 548C1228 535 1245 520 1250 505" fill="none" stroke="#2a80c4" stroke-width="6"/>
<path d="M1205 570C1215 572 1228 566 1238 558" fill="none" stroke="#9dd3fd" stroke-width="5"/>
</g>
</g>
</svg>

<div class="f" style="left:1845.5px;top:591px;width:45px;height:45px;border-radius:50%;box-shadow:0 2px 14px rgba(0,0,0,.15)">
<svg width="45" height="45" viewBox="0 0 45 45" xmlns="http://www.w3.org/2000/svg"><g fill="none" stroke="#b4b4b4" stroke-width="1.6"><path d="M21 21H15.500A4.500 4.500 0 1 1 21 15.500ZM24 21H29.500A4.500 4.500 0 1 0 24 15.500ZM21 24H15.500A4.500 4.500 0 1 0 21 29.500ZM24 24H29.500A4.500 4.500 0 1 1 24 29.500Z"/></g></svg>
</div>
<div class="f" style="left:1837px;top:646px;width:100px;height:45px;border-radius:22px;box-shadow:0 3px 14px rgba(0,0,0,.4)">
<svg width="60" height="45" viewBox="0 0 60 45" xmlns="http://www.w3.org/2000/svg"><defs><linearGradient id="gp2" x1="0" y1="0" x2="1" y2="0"><stop offset="0" stop-color="#7a2ee8"/><stop offset="1" stop-color="#1fb6e0"/></linearGradient></defs><circle cx="25.700" cy="22" r="15" fill="url(#gp2)"/><ellipse cx="25.700" cy="22" rx="11.500" ry="9" fill="#fff"/><ellipse cx="20.500" cy="22.500" rx="1.800" ry="3.500" fill="#111"/><path d="M33 19.500L29.500 22.500L33 25.500" fill="none" stroke="#111" stroke-width="2"/></svg>
</div>

</body>
</html>
